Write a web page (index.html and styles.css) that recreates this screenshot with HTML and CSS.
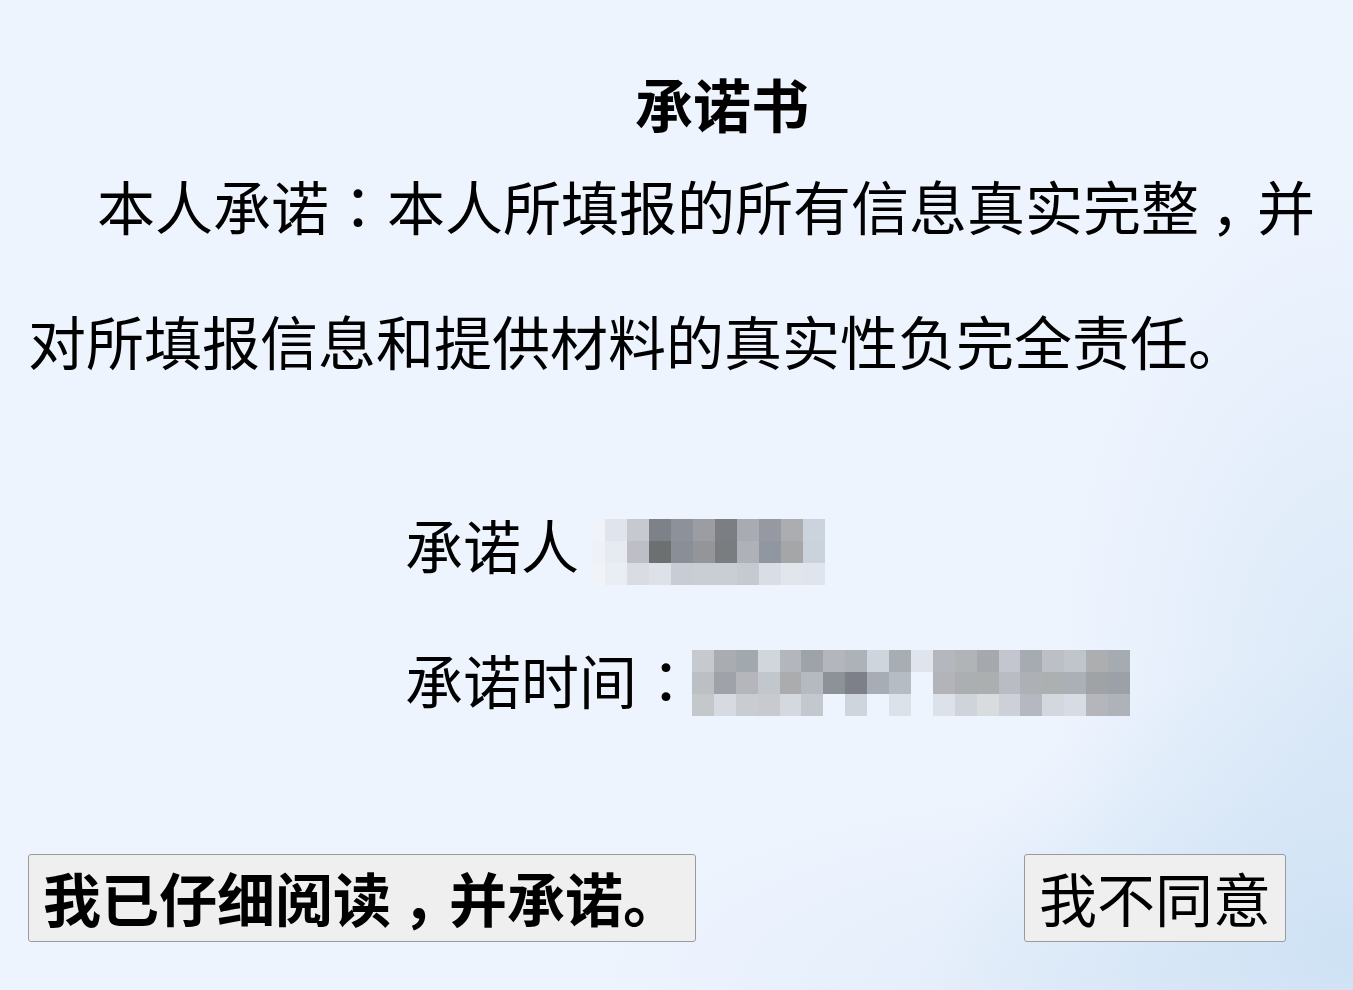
FILE: index.html
```html
<!DOCTYPE html>
<html lang="zh-CN">
<head>
    <meta charset="UTF-8">
    <meta name="viewport" content="width=device-width, initial-scale=1.0">
    <title>承诺书</title>
    <link rel="stylesheet" href="styles.css">
</head>
<body>
    <div id="pledge-page">
        <h1 class="title">承诺书</h1>
        <p class="pledge-text">本人承诺<span class="colon" lang="zh-Hant">：</span>本人所填报的所有信息真实完整<span class="comma">，</span>并对所填报信息和提供材料的真实性负完全责任。</p>

        <!-- 签名信息（已打码） -->
        <div class="sign">
            <div class="sign-row">
                <span class="sign-label">承诺人</span>
                <div class="mosaic mosaic-name" data-cells="
                    f0f3f8 e0e5ed c6cad0 7d8288 8d9199 9c9da2 7b7f83 a8acb2 9699a2 abadb0 cbd4dd
                    eef2f8 e6eaf1 bebec6 6c7070 8a8e96 949598 7a7d80 aeb2b8 9197a0 a5a6a8 cad3dc
                    f0f3f8 e9edf4 d9dde3 dde2e8 c8cdd5 c9cdd4 c9cdd4 c5cad1 d8dde6 e1e6ed e0e5ed"></div>
            </div>
            <div class="sign-row">
                <span class="sign-label">承诺时间<span class="colon" lang="zh-Hant">：</span></span>
                <div class="mosaic mosaic-date" data-cells="
                    c6cacf a9adb1 a1a8ae d1d5dc b3b6bc 9ea3aa b3b7bd adb2b8 cfd5dc a8adb3 e0e5ed b4b7bd b0b4b7 a5a8ad c3c6ce a6abb1 bcbfc5 c0c5cb acaeb0 a5abb1
                    bcbfc4 9fa3a9 b4b6bc c2c7ce aaacae b5bac0 8d9198 7d8088 a8acb4 b6bcc3 eef4fe b3b3ba abafb1 abafb0 babcc3 adb1b6 adb0b1 aab0b5 a0a3a5 9ca1a7
                    c5c8cb d7dbe1 c9cdd2 c8cad0 d4d8df c2c8ce eef4fe cfd5dc eef4fe dce2ea eef4fe dde2ea cfd3da d8dcdf cdd0d8 b5b8c0 d3d7de d7dce4 b4b6bb aeb3b9"></div>
            </div>
        </div>

        <div class="actions">
            <button class="btn btn-agree">我已仔细阅读<span class="comma">，</span>并承诺。</button>
            <button class="btn btn-refuse">我不同意</button>
        </div>
    </div>
    <script src="mosaic.js"></script>
</body>
</html>
```

FILE: styles.css
```css
body {
    margin: 0;
    min-height: 100vh;
    font-family: "Noto Sans CJK SC", "Microsoft YaHei", sans-serif;
    font-size: 58px;
    color: #000;
    background-color: #eef4fe;
    background-image:
        radial-gradient(ellipse 420px 300px at 100% 96%, rgba(205, 225, 244, 0.95), rgba(205, 225, 244, 0) 100%),
        radial-gradient(ellipse 300px 520px at 100% 70%, rgba(214, 230, 246, 0.8), rgba(214, 230, 246, 0) 100%),
        radial-gradient(ellipse 500px 200px at 80% 100%, rgba(222, 234, 248, 0.8), rgba(222, 234, 248, 0) 100%);
    overflow: hidden;
}

#pledge-page {
    padding: 0 28px;
}

/* 全角冒号居中 */
.colon {
    font-family: "Noto Sans CJK TC", "Noto Sans CJK SC", sans-serif;
}

/* 全角逗号：靠下、往中间挪一点 */
.comma {
    display: inline-block;
    box-sizing: border-box;
    width: 1em;
    padding-left: 0.2em;
    text-indent: 0;
}

.title {
    margin: 68px 0 0;
    padding-left: 91px;
    font-size: 58px;
    font-weight: bold;
    line-height: 70px;
    text-align: center;
}

.pledge-text {
    margin: 0;
    line-height: 135px;
    text-indent: 69px;
}

.sign {
    margin-top: 68px;
    padding-left: 377px;
}

.sign-row {
    display: flex;
    align-items: center;
    height: 135px;
}

.mosaic {
    display: grid;
    grid-auto-rows: 22px;
}

.mosaic-name {
    grid-template-columns: 13px repeat(10, 22px);
    margin: 16px 0 0 13px;
}

.mosaic-date {
    grid-template-columns: repeat(20, 21.9px);
    margin: 8px 0 0 -3px;
}

.actions {
    display: flex;
    justify-content: space-between;
    margin-top: 108px;
    padding-right: 39px;
}

.btn {
    padding: 8px 14px;
    font-family: inherit;
    font-size: 58px;
    line-height: 1.2;
    color: #000;
    background: #efefef;
    border: 1px solid #9a9a9a;
    border-radius: 3px;
    cursor: pointer;
}

.btn-agree {
    font-weight: bold;
}

.btn:hover {
    background: #e5e5e5;
}
```

FILE: mosaic.js
```js
// 打码区域：按颜色表铺格子
document.querySelectorAll('.mosaic').forEach(box => {
    const colors = box.dataset.cells.trim().split(/\s+/);
    colors.forEach(c => {
        const cell = document.createElement('span');
        cell.style.background = '#' + c;
        box.appendChild(cell);
    });
});
```
